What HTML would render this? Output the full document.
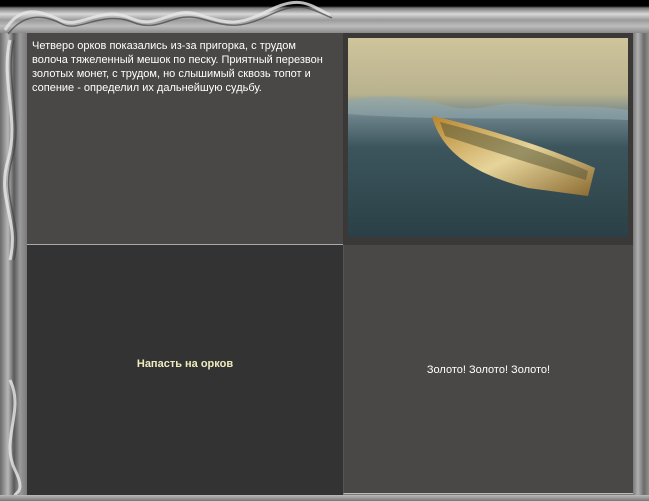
<!DOCTYPE html>
<html><head><meta charset="utf-8"><style>
body{margin:0;width:649px;height:501px;overflow:hidden;background:linear-gradient(90deg,#6a6a6a 0,#b8b8b8 8px,#5a5a5a 14px,#9a9a9a 20px,#7a7a7a 27px,#7a7a7a 633px,#b0b0b0 638px,#6a6a6a 644px,#909090 649px);position:relative;font-family:"Liberation Sans","DejaVu Sans",sans-serif}
.top{position:absolute;left:0;top:0;width:649px;height:33px;background:linear-gradient(#000 0,#000 6px,#777 8px,#d8d8d8 14px,#9a9a9a 20px,#bdbdbd 26px,#8a8a8a 33px)}
.bot{position:absolute;left:0;top:495px;width:649px;height:6px;background:linear-gradient(#bbb,#777)}
.c{position:absolute;box-sizing:border-box}
</style></head><body>
<div class="top"></div>
<svg style="position:absolute;left:0;top:0" width="649" height="501">
<g fill="none" stroke="#e8e8e8" stroke-width="3" opacity=".8">
<path d="M5 30 C20 5 40 10 60 20 S100 5 130 18 S170 5 200 15 S240 25 270 10 S310 5 330 15"/>
<path d="M10 40 C0 80 20 120 8 160 S20 220 10 260"/>
<path d="M10 380 C25 410 0 440 15 470 S5 490 20 500"/>
</g>
<g fill="none" stroke="#444" stroke-width="1.5" opacity=".7">
<path d="M8 34 C25 12 45 15 62 24 S102 10 132 22 S172 10 202 19 S242 28 272 14 S312 10 332 18"/>
<path d="M14 40 C4 80 24 120 12 160 S24 220 14 260"/>
</g>
</svg>
<div class="c" style="left:27px;top:33px;width:316px;height:211px;background:#4a4846;color:#fff;font-size:11px;line-height:14px;padding:6px 5px;white-space:nowrap">Четверо орков показались из-за пригорка, с трудом<br>волоча тяжеленный мешок по песку. Приятный перезвон<br>золотых монет, с трудом, но слышимый сквозь топот и<br>сопение - определил их дальнейшую судьбу.</div>
<div class="c" style="left:27px;top:244px;width:316px;height:1px;background:#aaa"></div>
<div class="c" style="left:343px;top:33px;width:290px;height:212px;background:#3a3938"></div>
<svg style="position:absolute;left:348px;top:38px" width="280" height="199">
<defs>
<linearGradient id="s" x1="0" y1="0" x2="0" y2="1"><stop offset="0" stop-color="#cfc49b"/><stop offset=".28" stop-color="#b8b28e"/><stop offset=".4" stop-color="#6a8088"/><stop offset=".55" stop-color="#3c555c"/><stop offset="1" stop-color="#2a4046"/></linearGradient>
<linearGradient id="b" x1="0" y1="0" x2="1" y2="1"><stop offset="0" stop-color="#b8862e"/><stop offset=".5" stop-color="#e6d49a"/><stop offset="1" stop-color="#8a6a30"/></linearGradient>
</defs>
<rect width="280" height="199" fill="url(#s)"/>
<path d="M0 62 C40 55 70 60 100 68 S150 62 180 66 S240 66 280 72 L280 82 C200 78 100 84 0 76Z" fill="#8fa8b0" opacity=".6"/>
<path d="M84 78 C92 110 120 135 180 150 L240 158 L247 130 C200 110 140 90 84 78Z" fill="url(#b)"/>
<path d="M92 84 C140 96 200 115 240 133 L238 142 C190 128 140 112 97 98Z" fill="#5a5a38" opacity=".55"/>
</svg>
<div class="c" style="left:27px;top:245px;width:316px;height:250px;background:#333;color:#f0ecc0;font-weight:bold;font-size:11px;text-align:center;padding-top:113px">Напасть на орков</div>
<div class="c" style="left:343px;top:245px;width:290px;height:249px;background:#4a4846;border-left:1px solid #555;border-bottom:1px solid #bbb;color:#fff;font-size:11px;text-align:center;padding-top:119px">Золото! Золото! Золото!</div>
<div class="bot"></div>
</body></html>
